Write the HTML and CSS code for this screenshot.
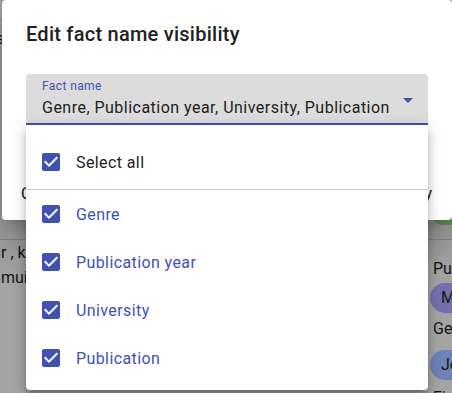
FILE: index.html
```html
<!DOCTYPE html>
<html lang="en">
<head>
    <meta charset="UTF-8">
    <meta name="viewport" content="width=device-width, initial-scale=1.0">
    <title>Edit fact name visibility</title>
    <link rel="stylesheet" href="styles.css">
</head>
<body>
    <!-- page behind the dialog (already dimmed) -->
    <div class="page">
        <div class="page-top"></div>
        <div class="page-crumb">s</div>
        <div class="page-actions"><span class="btn-green"></span></div>
        <div class="page-body">
            <div class="col-left">
                <div>r , kuhn</div>
                <div>muir</div>
            </div>
            <div class="col-right">
                <div class="fact-label">Publication</div>
                <span class="chip chip-purple">Merton</span>
                <div class="fact-label gap">Genre</div>
                <span class="chip chip-blue">Journal</span>
                <div class="fact-label">Field</div>
            </div>
        </div>
    </div>

    <div class="dialog">
        <h2 class="dialog-title">Edit fact name visibility</h2>
        <div class="select">
            <div class="select-text">
                <label class="select-label">Fact name</label>
                <div class="select-value">Genre, Publication year, University, Publication</div>
            </div>
            <svg class="select-arrow" viewBox="0 0 24 24" width="24" height="24"><path d="M7 10l5 5 5-5z"/></svg>
        </div>
        <div class="dialog-actions">
            <span>Clear</span>
            <span>Apply</span>
        </div>
    </div>

    <ul class="menu">
        <li class="menu-item all">
            <svg class="check" viewBox="0 0 24 24" width="24" height="24"><path d="M19 3H5c-1.11 0-2 .9-2 2v14c0 1.1.89 2 2 2h14c1.11 0 2-.9 2-2V5c0-1.1-.89-2-2-2zm-9 14l-5-5 1.41-1.41L10 14.17l7.59-7.59L19 8l-9 9z"/></svg>
            Select all
        </li>
        <li class="menu-divider"></li>
        <li class="menu-item">
            <svg class="check" viewBox="0 0 24 24" width="24" height="24"><path d="M19 3H5c-1.11 0-2 .9-2 2v14c0 1.1.89 2 2 2h14c1.11 0 2-.9 2-2V5c0-1.1-.89-2-2-2zm-9 14l-5-5 1.41-1.41L10 14.17l7.59-7.59L19 8l-9 9z"/></svg>
            Genre
        </li>
        <li class="menu-item">
            <svg class="check" viewBox="0 0 24 24" width="24" height="24"><path d="M19 3H5c-1.11 0-2 .9-2 2v14c0 1.1.89 2 2 2h14c1.11 0 2-.9 2-2V5c0-1.1-.89-2-2-2zm-9 14l-5-5 1.41-1.41L10 14.17l7.59-7.59L19 8l-9 9z"/></svg>
            Publication year
        </li>
        <li class="menu-item">
            <svg class="check" viewBox="0 0 24 24" width="24" height="24"><path d="M19 3H5c-1.11 0-2 .9-2 2v14c0 1.1.89 2 2 2h14c1.11 0 2-.9 2-2V5c0-1.1-.89-2-2-2zm-9 14l-5-5 1.41-1.41L10 14.17l7.59-7.59L19 8l-9 9z"/></svg>
            University
        </li>
        <li class="menu-item">
            <svg class="check" viewBox="0 0 24 24" width="24" height="24"><path d="M19 3H5c-1.11 0-2 .9-2 2v14c0 1.1.89 2 2 2h14c1.11 0 2-.9 2-2V5c0-1.1-.89-2-2-2zm-9 14l-5-5 1.41-1.41L10 14.17l7.59-7.59L19 8l-9 9z"/></svg>
            Publication
        </li>
    </ul>
</body>
</html>
```

FILE: styles.css
```css
body {
    margin: 0;
    width: 452px;
    height: 393px;
    overflow: hidden;
    position: relative;
    font-family: Roboto, "Liberation Sans", sans-serif;
    background: #a3a3a3;
    color: #141414;
}

/* page behind the overlay */
.page {
    display: flex;
    flex-direction: column;
    font-size: 16px;
}
.page-top {
    height: 20px;
    border-bottom: 1px solid #8a8a8a;
}
.page-crumb {
    height: 174px;
    line-height: 36px;
    margin-left: -4px;
}
.page-actions {
    display: flex;
    justify-content: flex-end;
    height: 44px;
}
.btn-green {
    width: 22px;
    height: 30px;
    background: #6a9a5c;
    border-radius: 14px 0 0 14px;
}
.page-body {
    display: flex;
    border-top: 1px solid #8a8a8a;
}
.col-left {
    flex: none;
    width: 430px;
    line-height: 25px;
    padding-left: 1px;
    box-sizing: border-box;
}
.col-right {
    flex: none;
    width: 120px;
    padding-top: 17px;
    white-space: nowrap;
}
.fact-label {
    line-height: 24px;
    padding-left: 3px;
}
.fact-label.gap {
    margin-top: 4px;
}
.chip {
    display: block;
    margin-top: 2px;
    height: 30px;
    line-height: 30px;
    padding-left: 11px;
    border-radius: 15px 0 0 15px;
}
.chip-purple {
    background: #7470ad;
}
.chip-blue {
    background: #6d82b7;
    margin-top: 9px;
    margin-bottom: 6px;
}

/* dialog */
.dialog {
    position: absolute;
    top: 0;
    left: 2px;
    width: 450px;
    height: 220px;
    background: #fff;
    border-radius: 4px;
    box-shadow: 0 11px 15px -7px rgba(0,0,0,0.2), 0 24px 38px 3px rgba(0,0,0,0.14), 0 9px 46px 8px rgba(0,0,0,0.12);
}
.dialog-title {
    margin: 0;
    padding: 18px 24px 0;
    font-size: 20px;
    font-weight: 500;
    line-height: 32px;
    letter-spacing: 0.25px;
    color: #212121;
}
.select {
    display: flex;
    margin: 24px 24px 0;
    background: #dcdcdc;
    border-radius: 4px 4px 0 0;
    border-bottom: 2px solid #3f51b5;
}
.select-text {
    flex: 1;
    padding: 6px 0 5px 16px;
}
.select-label {
    display: block;
    font-size: 12px;
    line-height: 12px;
    color: #3f51b5;
    letter-spacing: 0.4px;
}
.select-value {
    margin-top: 6px;
    font-size: 16px;
    line-height: 20px;
    color: #212121;
    letter-spacing: 0.48px;
    white-space: nowrap;
}
.select-arrow {
    fill: #3f51b5;
    margin: 14px 8px 0 0;
}
.dialog-actions {
    display: flex;
    justify-content: space-between;
    margin-top: 59px;
    padding: 0 20px 0 19px;
    font-size: 16px;
    line-height: 20px;
    color: #111;
}

/* dropdown menu */
.menu {
    position: absolute;
    top: 125px;
    left: 26px;
    width: 402px;
    margin: 0;
    padding: 13px 0 8px;
    list-style: none;
    background: #fff;
    border-radius: 0 0 4px 4px;
    box-shadow: 0 5px 5px -3px rgba(0,0,0,0.2), 0 8px 10px 1px rgba(0,0,0,0.14), 0 3px 14px 2px rgba(0,0,0,0.12);
}
.menu-item {
    display: flex;
    align-items: center;
    gap: 13px;
    height: 48px;
    padding-left: 13px;
    font-size: 16px;
    letter-spacing: 0.4px;
    color: #3f51b5;
}
.menu-item.all {
    color: #212121;
}
.menu-divider {
    margin-top: 3px;
    height: 1px;
    background: #cfcfcf;
}
.check {
    fill: #3f51b5;
}
```
